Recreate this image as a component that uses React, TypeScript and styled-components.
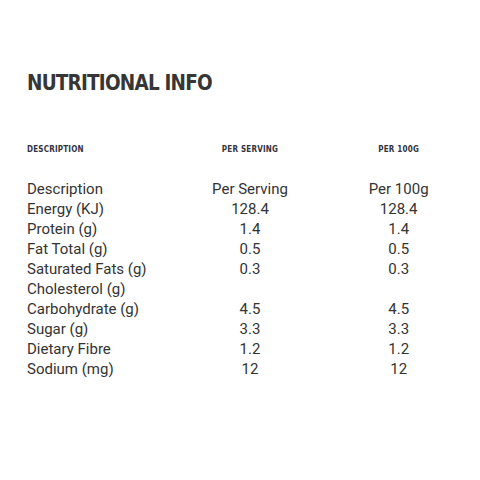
import React from "react";
import styled, { createGlobalStyle } from "styled-components";

const GlobalStyle = createGlobalStyle`
  html, body {
    margin: 0;
    padding: 0;
    background: #ffffff;
  }
`;

const Page = styled.div`
  padding: 70px 0 0 27px;
  color: #333333;
`;

const Title = styled.h2`
  margin: 0 0 48px;
  font-family: "DejaVu Sans Condensed", "DejaVu Sans", sans-serif;
  font-weight: bold;
  font-size: 20.5px;
  line-height: 26px;
  letter-spacing: -0.8px;
  color: #363636;
`;

const Table = styled.div`
  width: 446px;
  display: grid;
  grid-template-columns: repeat(3, 1fr);
`;

const HeadCell = styled.div<{ $align?: "left" | "center" }>`
  font-family: "DejaVu Sans Condensed", "DejaVu Sans", sans-serif;
  font-weight: bold;
  font-size: 8px;
  line-height: 12px;
  letter-spacing: 0.2px;
  text-transform: uppercase;
  color: #333340;
  text-align: ${(p) => p.$align ?? "center"};
  margin-bottom: 23px;
`;

const Cell = styled.div<{ $align?: "left" | "center" }>`
  font-family: Roboto, "Liberation Sans", sans-serif;
  font-size: 15px;
  line-height: 20px;
  color: #333333;
  text-align: ${(p) => p.$align ?? "center"};
`;

const rows: [string, string, string][] = [
  ["Description", "Per Serving", "Per 100g"],
  ["Energy (KJ)", "128.4", "128.4"],
  ["Protein (g)", "1.4", "1.4"],
  ["Fat Total (g)", "0.5", "0.5"],
  ["Saturated Fats (g)", "0.3", "0.3"],
  ["Cholesterol (g)", "", ""],
  ["Carbohydrate (g)", "4.5", "4.5"],
  ["Sugar (g)", "3.3", "3.3"],
  ["Dietary Fibre", "1.2", "1.2"],
  ["Sodium (mg)", "12", "12"],
];

const App: React.FC = () => {
  return (
    <>
      <GlobalStyle />
      <Page>
        <Title>NUTRITIONAL INFO</Title>
        <Table>
          <HeadCell $align="left">Description</HeadCell>
          <HeadCell>Per Serving</HeadCell>
          <HeadCell>Per 100g</HeadCell>
          {rows.map(([name, serving, per100]) => (
            <React.Fragment key={name}>
              <Cell $align="left">{name}</Cell>
              <Cell>{serving}</Cell>
              <Cell>{per100}</Cell>
            </React.Fragment>
          ))}
        </Table>
      </Page>
    </>
  );
};

export default App;
